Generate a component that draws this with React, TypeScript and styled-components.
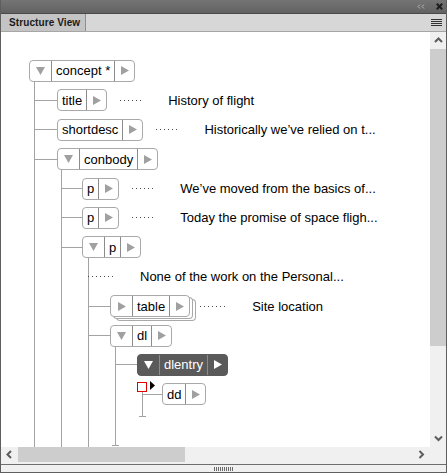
import styled, { createGlobalStyle, css } from 'styled-components';

const LINE = '#a3a3a3';
const EDGE = '#a9a9a9';

const GlobalStyle = createGlobalStyle`
  html, body { margin: 0; padding: 0; background: #fff; }
  body { font-family: "Liberation Sans", Arial, sans-serif; }
`;

type Item = {
  tag?: string;
  toggle?: 'open' | 'shut';
  note?: string;
  dots?: number;
  stacked?: boolean;
  active?: boolean;
  caret?: boolean;
  inset?: number;
  reach?: number;
  skip?: number;
  tail?: number;
  tick?: boolean;
  kids?: Item[];
};

const outline: Item = {
  tag: 'concept *', toggle: 'open', inset: 5, reach: 22, tail: 60,
  kids: [
    { tag: 'title', note: 'History of flight' },
    { tag: 'shortdesc', note: 'Historically we’ve relied on t...' },
    {
      tag: 'conbody', toggle: 'open', inset: 4, reach: 20, tail: 60,
      kids: [
        { tag: 'p', note: 'We’ve moved from the basics of...' },
        { tag: 'p', note: 'Today the promise of space fligh...' },
        {
          tag: 'p', toggle: 'open', inset: 6, reach: 21, tail: 60,
          kids: [
            { note: 'None of the work on the Personal...', dots: 7 },
            { tag: 'table', toggle: 'shut', stacked: true, note: 'Site location', dots: 7 },
            {
              tag: 'dl', toggle: 'open', inset: 5, reach: 21, tail: 29, tick: true,
              kids: [
                {
                  tag: 'dlentry', toggle: 'open', active: true, inset: 5, reach: 19, skip: 16, tail: 8, tick: true,
                  kids: [{ tag: 'dd', caret: true }],
                },
              ],
            },
          ],
        },
      ],
    },
  ],
};

const Panel = styled.div`
  width: 447px;
  height: 473px;
  box-sizing: border-box;
  display: flex;
  flex-direction: column;
  border: 1px solid #5e5e5e;
  border-top: none;
  background: #f0f0f0;
  overflow: hidden;
`;

const TitleBar = styled.div`
  height: 13px;
  background: linear-gradient(#747474, #626262);
  border-bottom: 1px solid #4a4a4a;
  display: flex;
  align-items: center;
  justify-content: flex-end;
  gap: 11px;
  padding-right: 3px;
`;

const TabRow = styled.div`
  height: 17px;
  background: #d7d7d7;
  border-bottom: 1px solid #a6a6a6;
  display: flex;
  align-items: stretch;
`;

const Tab = styled.div`
  width: 85px;
  background: #c4c4c4;
  border-right: 1px solid #8e8e8e;
  display: flex;
  align-items: center;
  padding-left: 8px;
  box-sizing: border-box;
  font-size: 10px;
  font-weight: bold;
  color: #1a1a1a;
  letter-spacing: 0.1px;
`;

const Menu = styled.div`
  margin-left: auto;
  margin-right: 4px;
  width: 11px;
  display: flex;
  flex-direction: column;
  justify-content: center;
  gap: 1px;
  span {
    height: 1px;
    background: #333;
  }
`;

const Body = styled.div`
  height: 415px;
  display: flex;
`;

const Canvas = styled.div`
  flex: 1;
  background: #fff;
  overflow: hidden;
`;

const VBar = styled.div`
  width: 16px;
  display: flex;
  flex-direction: column;
  background: #f0f0f0;
`;

const HBar = styled.div`
  height: 15px;
  display: flex;
  background: #f0f0f0;
`;

const Btn = styled.div<{ $side: number }>`
  flex: none;
  width: ${p => (p.$side ? `${p.$side}px` : 'auto')};
  height: ${p => (p.$side ? 'auto' : '17px')};
  display: flex;
  align-items: center;
  justify-content: center;
`;

const Thumb = styled.div<{ $len: number; $across?: boolean }>`
  flex: none;
  background: #cdcdcd;
  ${p => (p.$across ? css`width: ${p.$len}px;` : css`height: ${p.$len}px;`)}
`;

const Track = styled.div`
  flex: 1;
`;

const Corner = styled.div`
  width: 16px;
`;

const Footer = styled.div`
  flex: 1;
  margin-top: 2px;
  border-top: 1px solid #6e6e6e;
  display: flex;
  align-items: center;
  justify-content: center;
`;

const Grip = styled.div`
  width: 20px;
  height: 4px;
  background: repeating-linear-gradient(90deg, #6a6a6a 0 1px, transparent 1px 2px);
`;

const Tree = styled.div`
  padding: 24.3px 0 0 28px;
  color: #000;
`;

const Row = styled.div`
  position: relative;
  height: 29.4px;
  display: flex;
  align-items: center;
  white-space: nowrap;
`;

const Connector = styled.span<{ $w: number }>`
  flex: none;
  width: ${p => p.$w}px;
  height: 1px;
  background: ${LINE};
`;

const NodeBox = styled.div<{ $active?: boolean; $stacked?: boolean }>`
  flex: none;
  display: flex;
  height: 22px;
  box-sizing: border-box;
  border: 1px solid ${p => (p.$active ? '#5a5a5a' : EDGE)};
  border-radius: 4px;
  background: ${p => (p.$active ? '#5a5a5a' : '#fff')};
  color: ${p => (p.$active ? '#fff' : '#000')};
  ${p =>
    p.$stacked &&
    css`
      box-shadow: 3px 2px 0 -1px #fff, 3px 2px 0 0 ${EDGE}, 6px 4px 0 -1px #fff, 6px 4px 0 0 ${EDGE};
    `}
`;

const Cell = styled.span<{ $active?: boolean; $w?: number }>`
  display: flex;
  align-items: center;
  justify-content: center;
  box-sizing: border-box;
  ${p => (p.$w ? css`width: ${p.$w}px;` : css`padding: 0 4px;`)}
  font-size: 13px;
  & + & {
    border-left: 1px solid ${p => (p.$active ? '#8c8c8c' : EDGE)};
  }
`;

const Leader = styled.span<{ $dots: number; $gap: number }>`
  flex: none;
  width: ${p => p.$dots * 4 - 3}px;
  height: 1px;
  margin-left: ${p => p.$gap}px;
  background: linear-gradient(90deg, #4a4a4a 1px, transparent 1px) 0 0 / 4px 1px repeat-x;
`;

const Note = styled.span`
  margin-left: 27px;
  font-size: 13px;
`;

/* children hang off a guide line that drops from the parent node;
   $skip leaves the top of that line blank */
const Kids = styled.div<{ $inset: number; $skip: number }>`
  margin-left: ${p => p.$inset}px;
  margin-top: -3.7px;
  padding: 3.7px 0 0 1px;
  background: linear-gradient(${LINE}, ${LINE}) 0 ${p => p.$skip}px / 1px 100% no-repeat;
`;

const Tail = styled.div<{ $h: number }>`
  height: ${p => p.$h}px;
  display: flex;
  align-items: flex-end;
`;

const Tick = styled.span`
  width: 7px;
  height: 1px;
  margin-left: -4px;
  background: ${LINE};
`;

const Caret = styled.span`
  position: absolute;
  left: -6px;
  top: 2px;
  width: 10px;
  height: 10px;
  box-sizing: border-box;
  border: 1px solid #e00000;
  background: #fff;
`;

const Cursor = styled.span`
  position: absolute;
  left: 7px;
  top: 1px;
  display: flex;
`;

const Tri = ({ dir, tone }: { dir: 'down' | 'right'; tone: string }) =>
  dir === 'down' ? (
    <svg width="9" height="8" viewBox="0 0 9 8">
      <path d="M0 0H9L4.5 8Z" fill={tone} />
    </svg>
  ) : (
    <svg width="8" height="9" viewBox="0 0 8 9">
      <path d="M0 0L8 4.5L0 9Z" fill={tone} />
    </svg>
  );

const Chevron = ({ dir }: { dir: 'up' | 'down' | 'left' | 'right' }) => {
  const d = {
    up: 'M1 5L4.5 1.5L8 5',
    down: 'M1 1.5L4.5 5L8 1.5',
    left: 'M5 1L1.5 4.5L5 8',
    right: 'M1.5 1L5 4.5L1.5 8',
  }[dir];
  const flat = dir === 'up' || dir === 'down';
  return (
    <svg width={flat ? 9 : 7} height={flat ? 7 : 9} viewBox={flat ? '0 0 9 7' : '0 0 7 9'}>
      <path d={d} fill="none" stroke="#5c5c5c" strokeWidth="2" />
    </svg>
  );
};

function Node({ item }: { item: Item }) {
  const tone = item.active ? '#fff' : '#a0a0a0';
  return (
    <NodeBox $active={item.active} $stacked={item.stacked}>
      {item.toggle && (
        <Cell $active={item.active} $w={21}>
          <Tri dir={item.toggle === 'open' ? 'down' : 'right'} tone={tone} />
        </Cell>
      )}
      <Cell $active={item.active}>{item.tag}</Cell>
      <Cell $active={item.active} $w={20}>
        <Tri dir="right" tone={tone} />
      </Cell>
    </NodeBox>
  );
}

function Branch({ item, reach }: { item: Item; reach: number }) {
  return (
    <>
      <Row>
        {item.caret && (
          <>
            <Caret />
            <Cursor>
              <svg width="5" height="9" viewBox="0 0 5 9">
                <path d="M0 0L5 4.5L0 9Z" fill="#000" />
              </svg>
            </Cursor>
          </>
        )}
        {item.tag && (
          <>
            {reach > 0 && <Connector $w={reach} />}
            <Node item={item} />
          </>
        )}
        {item.note && (
          <>
            <Leader $dots={item.dots ?? 6} $gap={item.tag ? (item.stacked ? 10 : 13) : -1} />
            <Note>{item.note}</Note>
          </>
        )}
      </Row>
      {item.kids && (
        <Kids $inset={reach + (item.inset ?? 5)} $skip={item.skip ?? 0}>
          {item.kids.map((kid, i) => (
            <Branch key={i} item={kid} reach={item.reach ?? 22} />
          ))}
          <Tail $h={item.tail ?? 0}>{item.tick && <Tick />}</Tail>
        </Kids>
      )}
    </>
  );
}

export default function App() {
  return (
    <>
      <GlobalStyle />
      <Panel>
        <TitleBar>
          <svg width="8" height="5" viewBox="0 0 8 5">
            <path d="M3 0.5L1 2.5L3 4.5M7 0.5L5 2.5L7 4.5" fill="none" stroke="#b4b4b4" strokeWidth="1" />
          </svg>
          <svg width="7" height="7" viewBox="0 0 7 7">
            <path d="M0.8 0.8L6.2 6.2M6.2 0.8L0.8 6.2" stroke="#1c1c1c" strokeWidth="2" />
          </svg>
        </TitleBar>
        <TabRow>
          <Tab>Structure View</Tab>
          <Menu>
            <span />
            <span />
            <span />
            <span />
          </Menu>
        </TabRow>
        <Body>
          <Canvas>
            <Tree>
              <Branch item={outline} reach={0} />
            </Tree>
          </Canvas>
          <VBar>
            <Btn $side={0}>
              <Chevron dir="up" />
            </Btn>
            <Thumb $len={297} />
            <Track />
            <Btn $side={0}>
              <Chevron dir="down" />
            </Btn>
          </VBar>
        </Body>
        <HBar>
          <Btn $side={17}>
            <Chevron dir="left" />
          </Btn>
          <Thumb $len={167} $across />
          <Track />
          <Btn $side={17}>
            <Chevron dir="right" />
          </Btn>
          <Corner />
        </HBar>
        <Footer>
          <Grip />
        </Footer>
      </Panel>
    </>
  );
}
